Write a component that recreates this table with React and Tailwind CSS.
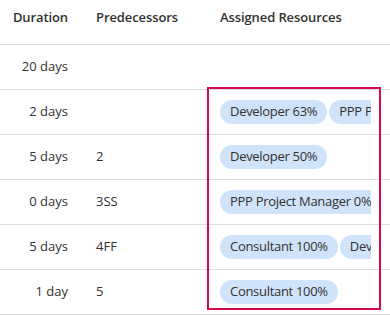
import React from "react";

const rows = [
  { duration: "20 days", pred: "", res: [] },
  { duration: "2 days", pred: "", res: ["Developer 63%", "PPP Project Manager 37%"] },
  { duration: "5 days", pred: "2", res: ["Developer 50%"] },
  { duration: "0 days", pred: "3SS", res: ["PPP Project Manager 0%"] },
  { duration: "5 days", pred: "4FF", res: ["Consultant 100%", "Developer 50%"] },
  { duration: "1 day", pred: "5", res: ["Consultant 100%"] },
];

const Pill = ({ label }) => (
  <span className="h-6 px-[10px] flex items-center rounded-full bg-[#cfe4fa] whitespace-nowrap flex-shrink-0 tracking-[-0.3px]">
    {label}
  </span>
);

export default function App() {
  return (
    <div
      className="relative w-[390px] h-[316px] overflow-hidden bg-white text-[13px] text-[#323130]"
      style={{ fontFamily: '"Segoe UI", "Open Sans", "Noto Sans", sans-serif' }}
    >
      {/* header */}
      <div className="flex h-[45px] pb-2 border-b border-[#e1dfdd] font-semibold tracking-[-0.1px] w-[420px]">
        <div className="w-[84px] pr-4 flex items-center justify-end">Duration</div>
        <div className="w-[124px] px-3 flex items-center">Predecessors</div>
        <div className="w-[175px] px-3 flex items-center">Assigned Resources</div>
      </div>

      {rows.map((r, i) => (
        <div key={i} className="flex h-[45px] border-b border-[#e1dfdd] w-[420px]">
          <div className="w-[84px] pr-4 flex items-center justify-end">{r.duration}</div>
          <div className="w-[124px] px-3 flex items-center">{r.pred}</div>
          <div className="w-[175px] px-3 flex items-center">
            <div className="flex items-center gap-[2px] overflow-hidden w-full">
              {r.res.map((p) => (
                <Pill key={p} label={p} />
              ))}
            </div>
          </div>
        </div>
      ))}

      {/* highlight box */}
      <div className="absolute left-[207px] top-[87px] w-[174px] h-[223px] border-2 border-[#d6084f] pointer-events-none" />
    </div>
  );
}
